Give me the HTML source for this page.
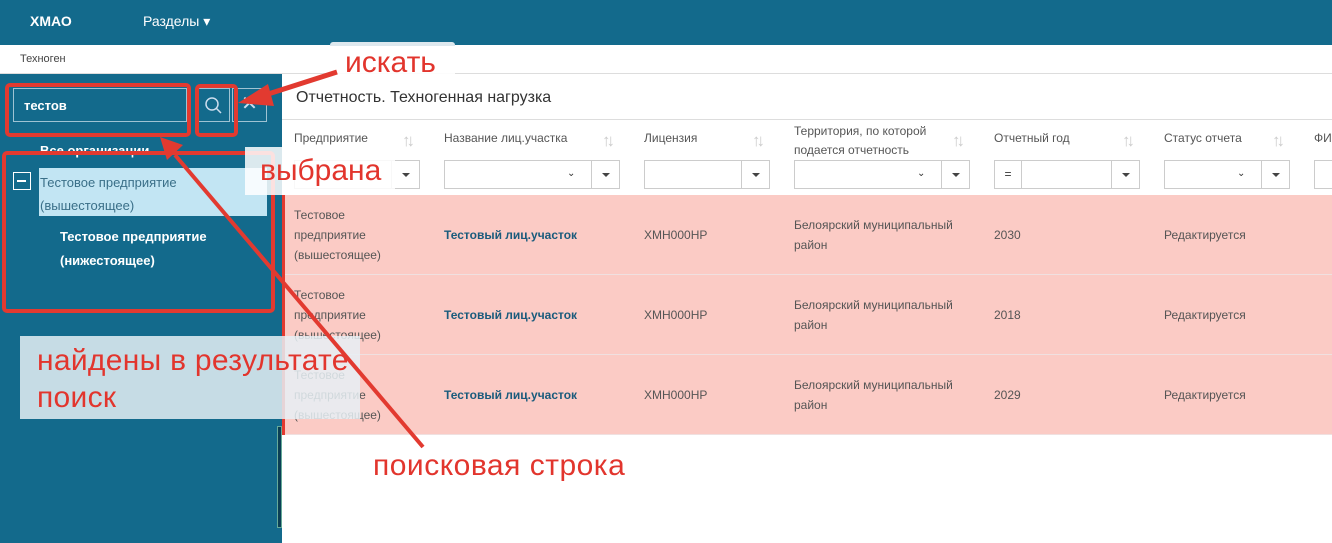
<!DOCTYPE html>
<html><head><meta charset="utf-8"><style>
*{box-sizing:border-box;margin:0;padding:0}
body{width:1332px;height:543px;overflow:hidden;position:relative;background:#fff;font-family:"Liberation Sans","DejaVu Sans",sans-serif;font-size:12px;color:#555}
.a{position:absolute}
.hdr{left:0;top:0;width:1332px;height:45px;background:#136a8c;color:#fff;font-size:14px}
.side{left:0;top:74px;width:282px;height:469px;background:#136a8c}
.th{color:#555;font-size:12px}
.sel{position:absolute;height:29px;border:1px solid #ccc;background:#fff}
.sel .dd{position:absolute;right:0;top:0;width:28px;height:27px;border-left:1px solid #ccc}
.sel .dd:after{content:"";position:absolute;left:10px;top:12px;border:4px solid transparent;border-top:4px solid #444}
.chev{position:absolute;font-size:10px;color:#333}
.sort{position:absolute;color:#ccc;font-size:17px;letter-spacing:-4px}
.row{position:absolute;left:282px;width:1050px;background:#fbcbc5;border-bottom:1px solid #f0e0e0}
.row div{position:absolute;font-size:12px;line-height:20px;color:#555}
.row .b{font-weight:bold;color:#1a5b7c}
.lab{position:absolute;color:#e2352d;font-size:30px;background:rgba(255,255,255,.9)}
.rb{position:absolute;border:4px solid #e23a30;border-radius:5px}
</style></head><body>
<div class="a hdr"><span class="a" style="left:30px;top:13px;font-weight:bold">ХМАО</span><span class="a" style="left:143px;top:13px">Разделы ▾</span></div>
<div class="a" style="left:330px;top:42px;width:125px;height:4px;background:#dde8ee;border-radius:3px 3px 0 0"></div>
<div class="a" style="left:0;top:45px;width:1332px;height:29px;border-bottom:1px solid #ddd"><span class="a" style="left:20px;top:8px;font-size:11px;color:#444">Техноген</span></div>
<div class="a side">
 <div class="a" style="left:13px;top:14px;width:174px;height:34px;border:1px solid #9fc3d3;color:#fff;font-weight:bold;font-size:13px;padding:9px 10px">тестов</div>
 <div class="a" style="left:197px;top:14px;width:33px;height:34px;border:1px solid #9fc3d3"><svg width="33" height="34"><circle cx="14" cy="15" r="6" fill="none" stroke="#cde" stroke-width="1.5"/><line x1="18.5" y1="19.5" x2="23" y2="24" stroke="#cde" stroke-width="1.5"/></svg></div>
 <div class="a" style="left:232px;top:14px;width:35px;height:34px;border:1px solid #9fc3d3;color:#cde;font-size:20px;text-align:center;line-height:30px">✕</div>
 <div class="a" style="left:40px;top:69px;color:#fff;font-weight:bold;font-size:13px">Все организации</div>
 <div class="a" style="left:39px;top:94px;width:228px;height:48px;background:#c2e5f3"></div>
 <div class="a" style="left:13px;top:98px;width:18px;height:18px;border:1.5px solid #fff"><div class="a" style="left:3px;top:7px;width:9px;height:1.5px;background:#fff"></div></div>
 <div class="a" style="left:40px;top:97px;color:#3a6f88;font-size:13px;line-height:23px">Тестовое предприятие<br>(вышестоящее)</div>
 <div class="a" style="left:60px;top:151px;color:#fff;font-weight:bold;font-size:13px;line-height:24px">Тестовое предприятие<br>(нижестоящее)</div>
 <div class="a" style="left:277px;top:352px;width:5px;height:102px;background:#0b3f55;border:1px solid #6a9"></div>
</div>
<div class="a" style="left:296px;top:89px;font-size:16px;color:#333">Отчетность. Техногенная нагрузка</div>
<div class="a" style="left:282px;top:119px;width:1050px;height:1px;background:#ddd"></div>
<div class="a th" style="left:294px;top:131px">Предприятие</div>
<div class="a th" style="left:444px;top:131px">Название лиц.участка</div>
<div class="a th" style="left:644px;top:131px">Лицензия</div>
<div class="a th" style="left:794px;top:122px;line-height:19px">Территория, по которой<br>подается отчетность</div>
<div class="a th" style="left:994px;top:131px">Отчетный год</div>
<div class="a th" style="left:1164px;top:131px">Статус отчета</div>
<div class="a th" style="left:1314px;top:131px">ФИ</div>
<span class="sort" style="left:402px;top:131px">↑↓</span><span class="sort" style="left:602px;top:131px">↑↓</span><span class="sort" style="left:752px;top:131px">↑↓</span><span class="sort" style="left:952px;top:131px">↑↓</span><span class="sort" style="left:1122px;top:131px">↑↓</span><span class="sort" style="left:1272px;top:131px">↑↓</span>
<div class="sel" style="left:294px;top:160px;width:126px"><div class="dd"></div></div>
<div class="sel" style="left:444px;top:160px;width:176px"><span class="chev" style="left:122px;top:7px">⌄</span><div class="dd"></div></div>
<div class="sel" style="left:644px;top:160px;width:126px"><div class="dd"></div></div>
<div class="sel" style="left:794px;top:160px;width:176px"><span class="chev" style="left:122px;top:7px">⌄</span><div class="dd"></div></div>
<div class="sel" style="left:994px;top:160px;width:146px"><div class="a" style="left:0;top:0;width:27px;height:27px;border-right:1px solid #ccc;text-align:center;line-height:27px;color:#333">=</div><div class="dd"></div></div>
<div class="sel" style="left:1164px;top:160px;width:126px"><span class="chev" style="left:72px;top:7px">⌄</span><div class="dd"></div></div>
<div class="sel" style="left:1314px;top:160px;width:30px"></div>
<div class="row" style="top:195px;height:80px"><div style="left:12px;top:10px">Тестовое<br>предприятие<br>(вышестоящее)</div><div class="b" style="left:162px;top:30px">Тестовый лиц.участок</div><div style="left:362px;top:30px">ХМН000НР</div><div style="left:512px;top:20px">Белоярский муниципальный<br>район</div><div style="left:712px;top:30px">2030</div><div style="left:882px;top:30px">Редактируется</div></div>
<div class="row" style="top:275px;height:80px"><div style="left:12px;top:10px">Тестовое<br>предприятие<br>(вышестоящее)</div><div class="b" style="left:162px;top:30px">Тестовый лиц.участок</div><div style="left:362px;top:30px">ХМН000НР</div><div style="left:512px;top:20px">Белоярский муниципальный<br>район</div><div style="left:712px;top:30px">2018</div><div style="left:882px;top:30px">Редактируется</div></div>
<div class="row" style="top:355px;height:80px"><div style="left:12px;top:10px">Тестовое<br>предприятие<br>(вышестоящее)</div><div class="b" style="left:162px;top:30px">Тестовый лиц.участок</div><div style="left:362px;top:30px">ХМН000НР</div><div style="left:512px;top:20px">Белоярский муниципальный<br>район</div><div style="left:712px;top:30px">2029</div><div style="left:882px;top:30px">Редактируется</div></div>
<div class="a" style="left:282px;top:195px;width:3px;height:240px;background:#e23a30"></div>
<!-- annotations -->
<div class="rb" style="left:5px;top:83px;width:186px;height:54px"></div>
<div class="rb" style="left:195px;top:84px;width:43px;height:53px"></div>
<div class="rb" style="left:2px;top:151px;width:273px;height:162px"></div>
<div class="lab" style="left:337px;top:46px;width:118px;height:34px;padding-left:8px;line-height:34px">искать</div>
<div class="lab" style="left:245px;top:147px;width:150px;height:48px;padding-left:15px;line-height:48px;background:rgba(255,255,255,.85)">выбрана</div>
<div class="lab" style="left:20px;top:336px;width:340px;height:83px;padding:6px 0 0 17px;line-height:37px;background:rgba(230,240,245,.85);letter-spacing:.3px">найдены в результате<br>поиск</div>
<div class="lab" style="left:373px;top:447px;background:none;line-height:38px;letter-spacing:.5px">поисковая строка</div>
<svg class="a" style="left:0;top:0" width="1332" height="543">
<line x1="337" y1="72" x2="262" y2="96" stroke="#e23a30" stroke-width="5"/>
<polygon points="238,103 268,84 274,106" fill="#e23a30"/>
<line x1="423" y1="447" x2="175" y2="155" stroke="#e23a30" stroke-width="4"/>
<polygon points="160,137 183,145 167,160" fill="#e23a30"/>
</svg>
</body></html>
